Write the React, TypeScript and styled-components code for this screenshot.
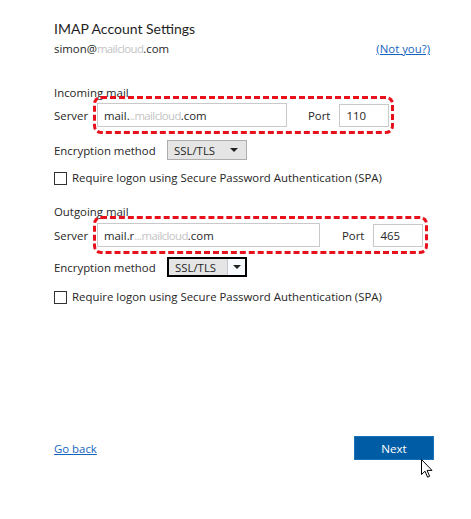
import styled, { createGlobalStyle } from 'styled-components';

const GlobalStyle = createGlobalStyle`
    html, body {
        margin: 0;
        padding: 0;
        background: #ffffff;
    }
    body {
        font-family: 'Open Sans', 'Noto Sans', sans-serif;
        font-size: 11.4px;
        color: #262626;
    }
`;

const Page = styled.div`
    width: 471px;
    height: 519px;
    box-sizing: border-box;
    padding: 18px 41px 0 54px;
    display: flex;
    flex-direction: column;
`;

const Title = styled.h1`
    margin: 0;
    font-family: Lato, 'Open Sans', sans-serif;
    font-size: 14px;
    line-height: 22px;
    font-weight: 400;
    color: #1f1f1f;
`;

const AccountRow = styled.div`
    margin-top: 1px;
    display: flex;
    justify-content: space-between;
    line-height: 16px;
`;

const Hidden = styled.span`
    color: #c4c4c4;
    letter-spacing: -0.6px;
`;

const Link = styled.a`
    color: #1565c0;
    text-decoration: underline;
    cursor: pointer;
`;

const SectionTitle = styled.div<{ $gap: number }>`
    margin-top: ${p => p.$gap}px;
    line-height: 16px;
`;

const Row = styled.div<{ $gap: number }>`
    margin-top: ${p => p.$gap}px;
    display: flex;
    align-items: center;
`;

const Label = styled.span<{ $width: number }>`
    width: ${p => p.$width}px;
    flex-shrink: 0;
`;

// red dashed annotation drawn over the server/port fields
const Highlight = styled.div`
    position: relative;
    display: flex;
    align-items: center;

    &::after {
        content: '';
        position: absolute;
        inset: -7px -5px -7px -4px;
        border: 3px dashed #e8101a;
        border-radius: 8px;
        pointer-events: none;
    }
`;

const TextBox = styled.div<{ $width: number }>`
    width: ${p => p.$width}px;
    height: 24px;
    box-sizing: border-box;
    border: 1px solid #c9c9c9;
    padding: 0 6px;
    display: flex;
    align-items: center;
    background: #fff;
`;

const PortLabel = styled.span<{ $left: number }>`
    margin-left: ${p => p.$left}px;
    margin-right: 9px;
`;

const PortBox = styled(TextBox)`
    height: 23px;
`;

const Select = styled.div<{ $focused?: boolean }>`
    width: 80px;
    height: 20px;
    box-sizing: border-box;
    display: flex;
    align-items: stretch;
    background: #e5e5e5;
    border: ${p => (p.$focused ? '2px solid #000' : '1px solid #adadad')};
`;

const SelectValue = styled.span`
    flex: 1;
    display: flex;
    align-items: center;
    padding-left: 6px;
`;

const SelectArrow = styled.span<{ $focused?: boolean }>`
    width: 17px;
    display: flex;
    align-items: center;
    justify-content: center;
    background: ${p => (p.$focused ? '#f7fbff' : 'transparent')};
    border-left: ${p => (p.$focused ? '1px solid #c6c6c6' : 'none')};
    margin-right: ${p => (p.$focused ? 0 : 4)}px;

    &::before {
        content: '';
        border-left: 4px solid transparent;
        border-right: 4px solid transparent;
        border-top: 4px solid #222;
    }
`;

const CheckRow = styled.label<{ $gap: number }>`
    margin-top: ${p => p.$gap}px;
    display: flex;
    align-items: center;
    line-height: 16px;
`;

const CheckBox = styled.span`
    width: 13px;
    height: 13px;
    box-sizing: border-box;
    border: 1px solid #333;
    background: #fff;
    margin-right: 5px;
`;

const Footer = styled.div`
    margin-top: 131px;
    margin-right: -4px;
    display: flex;
    justify-content: space-between;
    align-items: center;
`;

const ButtonWrap = styled.div`
    position: relative;
`;

const NextButton = styled.button`
    width: 80px;
    height: 24px;
    box-sizing: border-box;
    border: 1px solid #1a6fb5;
    background: #005ca4;
    color: #fff;
    font-family: inherit;
    font-size: 11.6px;
    padding: 0;
`;

const Cursor = styled.svg`
    position: absolute;
    left: 67px;
    top: 23px;
`;

type ServerProps = {
    host: [string, string, string];
    port: string;
    width: number;
    portGap: number;
    gap: number;
};

const ServerRow = ({ host, port, width, portGap, gap }: ServerProps) => (
    <Row $gap={gap}>
        <Label $width={43}>Server</Label>
        <Highlight>
            <TextBox $width={width}>
                {host[0]}
                <Hidden>{host[1]}</Hidden>
                {host[2]}
            </TextBox>
            <PortLabel $left={portGap}>Port</PortLabel>
            <PortBox $width={50}>{port}</PortBox>
        </Highlight>
    </Row>
);

const EncryptionRow = ({ gap, focused }: { gap: number; focused?: boolean }) => (
    <Row $gap={gap}>
        <Label $width={113}>Encryption method</Label>
        <Select $focused={focused}>
            <SelectValue>SSL/TLS</SelectValue>
            <SelectArrow $focused={focused} />
        </Select>
    </Row>
);

export default function App() {
    return (
        <>
            <GlobalStyle />
            <Page>
                <Title>IMAP Account Settings</Title>
                <AccountRow>
                    <span>
                        simon@<Hidden>mailcloud</Hidden>.com
                    </span>
                    <Link>(Not you?)</Link>
                </AccountRow>

                <SectionTitle $gap={28}>Incoming mail</SectionTitle>
                <ServerRow
                    gap={2}
                    host={['mail.', '..mailcloud', '.com']}
                    port="110"
                    width={190}
                    portGap={21}
                />
                <EncryptionRow gap={13} />
                <CheckRow $gap={10}>
                    <CheckBox />
                    Require logon using Secure Password Authentication (SPA)
                </CheckRow>

                <SectionTitle $gap={18}>Outgoing mail</SectionTitle>
                <ServerRow
                    gap={3}
                    host={['mail.r', '...mailcloud', '.com']}
                    port="465"
                    width={223}
                    portGap={22}
                />
                <EncryptionRow gap={10} focused />
                <CheckRow $gap={12}>
                    <CheckBox />
                    Require logon using Secure Password Authentication (SPA)
                </CheckRow>

                <Footer>
                    <Link>Go back</Link>
                    <ButtonWrap>
                        <NextButton>Next</NextButton>
                        <Cursor width="13" height="19" viewBox="0 0 13 19">
                            <path
                                d="M0.5 0.5 L0.5 15.5 L4 12.2 L6.6 18.2 L8.6 17.3 L6.1 11.4 L11 11.4 Z"
                                fill="#fff"
                                stroke="#000"
                                strokeWidth="1"
                                strokeLinejoin="round"
                            />
                        </Cursor>
                    </ButtonWrap>
                </Footer>
            </Page>
        </>
    );
}
